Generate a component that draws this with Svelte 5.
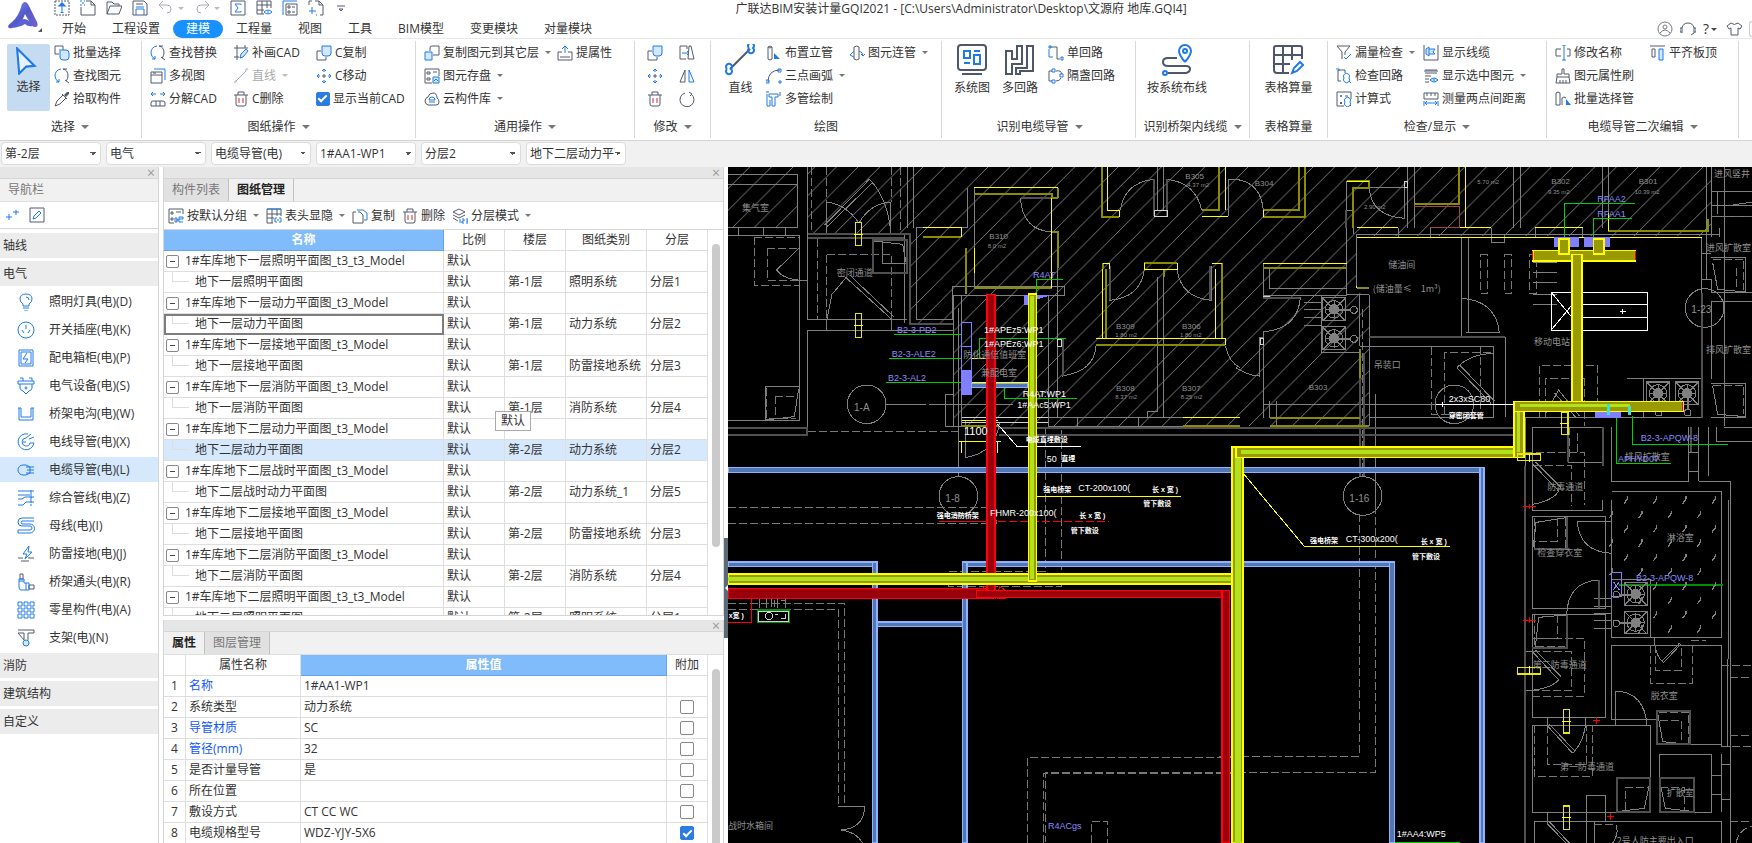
<script lang="ts">
  type Shape = [string, string];
  type Tool = { icon: string; label?: string; arrow?: boolean; disabled?: boolean; check?: boolean };
  type Group = { name: string; arrow?: boolean; kind?: string; big?: Tool[]; cols: Tool[][] };

  // shape kinds: k dark line, b blue line, f blue fill, l pale fill, r red line, g grey line
  const icons: Record<string, Shape[]> = {
    upload: [["d", "M1 1H15V15H1Z"], ["b", "M8 13V4"], ["f", "M3.5 6.5L8 2L12.5 6.5Z"], ["b", "M6.5 12.5H9.5"]],
    newFile: [["k", "M6 1H11L15 5V15H1V7M11 1V5H15"], ["b", "M0 1H2M4 1H5M2 3H4M0 5H2M4 5H5"]],
    open: [["k", "M1 14V2H6L8 4H13V6M1 14L4 6H16L13 14Z"]],
    save: [["k", "M4 1H12L15 4V15H1V1H4M4 4H11"], ["b", "M4 15V9H12V15M4 7H12"]],
    undo: [["g", "M5 1L1 5L5 9M1 5H9Q13 5 13 9T9 13"]],
    redo: [["g", "M11 1L15 5L11 9M15 5H7Q3 5 3 9T7 13"]],
    sigma: [["k", "M1 1H15V15H1Z"], ["b", "M11 5V4H5L8 8L5 12H11V11"]],
    gridEye: [["k", "M15 8V1H1V14H8M1 5H15M1 10H8M6 1V14M11 1V8"], ["b", "M8 12Q12 8 16 12Q12 16 8 12M11 12H13"]],
    listDoc: [["b", "M1 15V1H15"], ["k", "M4 4H15V15H4ZM10 7H13M10 12H13M6 6H8V8H6ZM6 11H8V13H6Z"]],
    addDoc: [["k", "M1 5V1H4M7 1H11L15 5V15H12M11 1V5H15M9 15H8"], ["b", "M4 7V14M1 11H8"]],
    more: [["k", "M3 6H11"], ["k", "M5 9L7 11L9 9Z"]],
    arrow: [["b", "M3 2L28 27L16 28L6 38Z"]],
    batch: [["k", "M1 1H9V7M1 1V9H5"], ["lb", "M5 5H12Q15 5 15 8V12Q15 15 12 15H9Q6 15 6 12V6"]],
    find: [["b", "M7 1Q1 2 1 8Q1 12 5 14M2 14H5V11"], ["k", "M9 1Q14 2 14 8Q14 11 12 13M9 1H13M11 12L15 15"]],
    dropper: [["k", "M1 15L3 10L9 4L12 7L6 13ZM8 3L13 8"], ["kf", "M10 4L13 1H15V3L12 6Z"]],
    windows: [["b", "M4 1H15V12"], ["k", "M1 4H12V15H1ZM1 7H12M3 5H6"]],
    split: [["b", "M6 3H1L3 1M1 3L3 5M10 3H15L13 1M15 3L13 5"], ["k", "M3 10H13Q15 10 15 12V15H1V12Q1 10 3 10M6 10V15M10 10V15"]],
    patch: [["k", "M4 0V15M1 3H15M1 12H6M12 0V3"], ["lb", "M7 13L8 9L13 4L15 6L10 12Z"]],
    line: [["g", "M3 13L13 3M1 14H3V12M13 3V1H15"]],
    trash: [["k", "M3 4V13Q3 15 5 15H11Q13 15 13 13V4M1 4H15M5 4V1H11V4"], ["r", "M6 7V12M10 7V12"]],
    copy: [["k", "M5 6H1V15H10V12"], ["lb", "M6 1H15V8Q15 11 12 11H9Q6 11 6 8Z"]],
    move: [["b", "M8 1V4M6 3L8 1L10 3M8 15V12M6 13L8 15L10 13M1 8H4M3 6L1 8L3 10M15 8H12M13 6L15 8L13 10"], ["k", "M6 8H10M8 6V10"]],
    copyTo: [["lb", "M1 7H8V15H1Z"], ["k", "M6 6V3Q6 1 8 1H15V10H9"]],
    store: [["k", "M15 8V1H1V15H8M3 4H6V6H3ZM3 10H6V12H3ZM9 4H13"], ["lb", "M9 9H15V15H9ZM10 13L12 11L14 13"]],
    cloud: [["k", "M4 14Q1 13 1 10T4 6Q5 2 9 2T13 7Q15 8 15 11T12 14Z"], ["b", "M5 9Q5 6 8 6T11 9ZM5 11H11"]],
    lift: [["b", "M8 8V1M5 4L8 1L11 4"], ["k", "M5 7H1V15H15V7H11M3 12H13"]],
    flipDoc: [["k", "M7 14H1V1H8V4M10 1H12L15 14H9Z"], ["b", "M3 8H10M8 6L10 8L8 10"]],
    mirror: [["k", "M6 2V14H1Z"], ["b", "M10 2V14H15Z"]],
    rotate: [["k", "M6 2A7 7 0 1 0 12 3M10 1L13 3L11 5"]],
    bigLine: [["K", "M5 25L25 5"], ["B", "M2 25A3 3 0 1 0 6 25A3 3 0 1 0 2 25M24 4A3 3 0 1 0 28 4A3 3 0 1 0 24 4"]],
    riser: [["k", "M2 2Q4 0 6 2V14Q4 16 2 14ZM2 2Q4 4 6 2"], ["f", "M8 8L14 14H8Z"]],
    arc: [["k", "M2 14Q2 2 14 2"], ["b", "M0 12H3V15H0ZM12 1H15V4H12ZM13 13H15V15H13Z"]],
    multi: [["b", "M3 3H12V6H9V15H6V6H3ZM1 3V15H4V9"], ["k", "M0 1H3M14 1V5"]],
    joinPipe: [["k", "M5 2Q8 0 10 2V14Q8 16 5 14Z"], ["b", "M5 6L1 10L5 12M10 6Q14 7 14 11M12 9L14 11L16 9"]],
    system: [["K", "M5 1H27Q30 1 30 4V23Q30 26 27 26H5Q2 26 2 23V4Q2 1 5 1M6 30H26"], ["B", "M8 7H14V14H8ZM18 7H24M18 11H24V20H18ZM8 19H14"]],
    circuits: [["K", "M2 7H8V15H13V2H18V20H8V30H2ZM23 2H29V27H16V30H12V24H23Z"]],
    single: [["k", "M2 2H9V14H12"], ["b", "M1 1H3V3H1ZM13 12H15V15H13ZM1 4V12H5"]],
    box: [["k", "M4 3H1V13H4M8 3Q13 2 14 6M13 10Q12 13 8 13"], ["b", "M4 1H7V4H4ZM4 12H7V15H4ZM12 6H15V9H12Z"]],
    route: [["K", "M16 14H7Q2 14 2 18T7 22H25Q29 22 29 25T25 29H7"], ["B", "M24 18Q18 11 18 7A6 6 0 0 1 30 7Q30 11 24 18M22 7A2 2 0 1 0 26 7A2 2 0 1 0 22 7M2 29A2 2 0 1 0 6 29A2 2 0 1 0 2 29"]],
    tableCalc: [["K", "M30 15V4Q30 2 28 2H4Q2 2 2 4V26Q2 29 5 29H17M2 11H30M2 20H18M11 2V29M20 2V16"], ["B", "M20 29L22 24L28 18L31 21L25 27Z"]],
    filter: [["k", "M1 1H14L9 7V10M1 1L6 7V14"], ["b", "M8 12L10 14L15 9"]],
    checkLoop: [["k", "M2 2H9V5M2 2V13H5"], ["b", "M0 1H3V3M8 10A3 3 0 1 0 13 10A3 3 0 1 0 8 10M13 13L15 15"]],
    formula: [["k", "M15 8V1H1V15H8M4 5H6M5 4V6M9 5H12M4 11L6 13M6 11L4 13"], ["b", "M9 11A3 3 0 1 0 14 11A3 3 0 1 0 9 11M14 14L15 15"]],
    cable: [["k", "M1 0V15H15M15 0V15"], ["lb", "M3 4L6 2V11L3 9ZM6 4H12L10 7L12 9H6"]],
    layers: [["k", "M2 2H14M2 5H14M2 8H8M2 11H6M1 3H15M2 14H6"], ["lb", "M7 12Q11 8 15 12Q11 16 7 12M10 12H12"]],
    measure: [["k", "M1 2H15V8H1ZM4 2V5M8 2V5M12 2V5"], ["b", "M1 10V15M15 10V15M2 12H14M4 10L2 12L4 14M12 10L14 12L12 14"]],
    rename: [["k", "M6 4H1V11H6M12 4H15V11H12"], ["b", "M9 0V15M7 0H11M7 15H11"]],
    brush: [["k", "M7 1H9V6H14V9H2V6H7ZM2 9L1 15H15L14 9M5 12V15M8 12V15M11 12V15"]],
    pipeSel: [["k", "M1 2Q3 0 5 2V14H1ZM7 14V7Q9 5 11 7"], ["f", "M11 8L16 14H11Z"]],
    alignTop: [["k", "M0 1H15M2 4H5V12H2Z"], ["lb", "M9 4H13V15H9Z"]],
    user: [["u", "M8 1A7 7 0 1 0 8 15A7 7 0 1 0 8 1M6 6A2 2 0 1 0 10 6A2 2 0 1 0 6 6M3 12Q8 6 13 12"]],
    headset: [["k", "M2 12V7Q3 2 8 2T14 7V12M2 7H0V11H2M14 7H16V11H14M14 12L11 14"]],
    shirt: [["k", "M5 2L1 5L3 8L5 7V14H12V7L14 8L16 5L12 2Q8 5 5 2"]],
    plus: [["b", "M4 7V13M1 10H7M11 3V8M8 5H14"]],
    edit: [["k", "M1 1H15V15H1Z"], ["b", "M4 12L5 9L10 4L12 6L7 11Z"]],
    groupBy: [["k", "M15 6V1H1V15H6M3 4H5V6H3ZM3 10H5V12H3ZM8 4H13"], ["b", "M8 12H11M7 10H9V14H7ZM11 9V14M11 9H15V11H11M11 14H15"]],
    header: [["k", "M1 1H15V8M1 1V15H7M1 6H15M1 10H8M6 1V15M11 1V8"], ["b", "M1 1H15M11 10H9V14H11M13 10H15V14H13M11 12H13"]],
    copyDoc: [["k", "M1 4H4M1 4V15H11V7L8 4H6"], ["b", "M5 2H11L15 5V12H12"]],
    stack: [["k", "M1 4L7 1L13 4L7 7ZM1 7L7 10L13 7M1 10L6 13"], ["b", "M8 11V15M10 11H12V13H10V15H12M14 11H16V15H14M14 13H16"]],
    lamp: [["b", "M6 13V11Q3 9 3 6Q3 1 9 1T15 6Q15 9 12 11V13ZM6 15H12M7 18H11"], ["b", "M9 4Q12 4 12 7"]],
    socket: [["b", "M9 1A8 8 0 1 0 9 17A8 8 0 1 0 9 1M9 4V8M5 9L7 12M13 9L11 12"]],
    panel: [["b", "M2 1H16V17H2ZM4 3H14V15H4ZM10 4L6 10H11L8 14"]],
    device: [["b", "M1 4H17V7H1ZM3 1H6V4M12 1H15V4M3 7V11Q3 13 6 14L9 17L12 14Q15 13 15 11V7M8 11A1 1 0 1 0 10 11A1 1 0 1 0 8 11"]],
    tray: [["b", "M1 3H4V12H14V3H17M2 3V15H16V3"]],
    wire: [["b", "M11 1A8 8 0 1 0 17 10H13A4 4 0 1 1 9 5M9 5L14 1M12 6L17 4M6 9H9"]],
    conduit: [["lb", "M9 4H6A5 5 0 0 0 6 14H9L13 12V6Z"], ["b", "M9 6H17M10 9H17M9 12H17"]],
    pipes: [["b", "M1 2H17M1 6H13M1 10H5L8 8H17M1 16H6L9 13H17M14 1V14M14 15V17"]],
    bus: [["b", "M17 1H5A4 4 0 0 0 5 9H13A2 2 0 0 1 13 13H1M17 4H5A2 2 0 0 0 5 7H13A4 4 0 0 1 13 16H1V13"]],
    bolt: [["b", "M12 1L6 9H10L8 14L15 7H11Z"], ["k", "M1 13H6M11 13H17M4 16H12"]],
    fitting: [["k", "M3 1H6V6H3ZM12 12H17V16H12Z"], ["b", "M2 6H7V10H12V17H4Q2 17 2 14ZM9 10V17M2 8H7"]],
    tiles: [["b", "M1 1H5V5H1ZM7 1H11V5H7ZM13 1H17V5H13ZM1 7H5V11H1ZM7 7H11V11H7ZM13 7H17V11H13ZM1 13H5V17H1ZM7 13H11V17H7ZM13 13H17V17H13Z"]],
    support: [["k", "M1 1H17V4H11V11M7 11V4H1Z"], ["lb", "M9 11A3 3 0 1 0 9 17A3 3 0 1 0 9 11"]]
  };

  const menus = ["开始", "工程设置", "建模", "工程量", "视图", "工具", "BIM模型", "变更模块", "对量模块"];

  const groups: Group[] = [
    {
      name: "选择", arrow: true, kind: "select", big: [{ icon: "arrow", label: "选择" }],
      cols: [[{ icon: "batch", label: "批量选择" }, { icon: "find", label: "查找图元" }, { icon: "dropper", label: "拾取构件" }]]
    },
    {
      name: "图纸操作", arrow: true, kind: "sheets",
      cols: [
        [{ icon: "find", label: "查找替换" }, { icon: "windows", label: "多视图" }, { icon: "split", label: "分解CAD" }],
        [{ icon: "patch", label: "补画CAD" }, { icon: "line", label: "直线", arrow: true, disabled: true }, { icon: "trash", label: "C删除" }],
        [{ icon: "copy", label: "C复制" }, { icon: "move", label: "C移动" }, { icon: "", label: "显示当前CAD", check: true }]
      ]
    },
    {
      name: "通用操作", arrow: true, kind: "common",
      cols: [
        [{ icon: "copyTo", label: "复制图元到其它层", arrow: true }, { icon: "store", label: "图元存盘", arrow: true }, { icon: "cloud", label: "云构件库", arrow: true }],
        [{ icon: "lift", label: "提属性" }]
      ]
    },
    {
      name: "修改", arrow: true, kind: "modify",
      cols: [[{ icon: "copy" }, { icon: "move" }, { icon: "trash" }], [{ icon: "flipDoc" }, { icon: "mirror" }, { icon: "rotate" }]]
    },
    {
      name: "绘图", kind: "draw", big: [{ icon: "bigLine", label: "直线" }],
      cols: [
        [{ icon: "riser", label: "布置立管" }, { icon: "arc", label: "三点画弧", arrow: true }, { icon: "multi", label: "多管绘制" }],
        [{ icon: "joinPipe", label: "图元连管", arrow: true }]
      ]
    },
    {
      name: "识别电缆导管", arrow: true, kind: "identify",
      big: [{ icon: "system", label: "系统图" }, { icon: "circuits", label: "多回路" }],
      cols: [[{ icon: "single", label: "单回路" }, { icon: "box", label: "隔盏回路" }]]
    },
    { name: "识别桥架内线缆", arrow: true, kind: "bridge", big: [{ icon: "route", label: "按系统布线" }], cols: [] },
    { name: "表格算量", kind: "calc", big: [{ icon: "tableCalc", label: "表格算量" }], cols: [] },
    {
      name: "检查/显示", arrow: true, kind: "inspect",
      cols: [
        [{ icon: "filter", label: "漏量检查", arrow: true }, { icon: "checkLoop", label: "检查回路" }, { icon: "formula", label: "计算式" }],
        [{ icon: "cable", label: "显示线缆" }, { icon: "layers", label: "显示选中图元", arrow: true }, { icon: "measure", label: "测量两点间距离" }]
      ]
    },
    {
      name: "电缆导管二次编辑", arrow: true, kind: "reedit",
      cols: [
        [{ icon: "rename", label: "修改名称" }, { icon: "brush", label: "图元属性刷" }, { icon: "pipeSel", label: "批量选择管" }],
        [{ icon: "alignTop", label: "平齐板顶" }]
      ]
    }
  ];

  const filters = [
    { label: "楼层", value: "第-2层" },
    { label: "专业", value: "电气" },
    { label: "构件类型", value: "电缆导管(电)" },
    { label: "构件", value: "1#AA1-WP1" },
    { label: "分层", value: "分层2" },
    { label: "图纸", value: "地下二层动力平面图" }
  ];

  const navItems = [
    ["lamp", "照明灯具(电)(D)"],
    ["socket", "开关插座(电)(K)"],
    ["panel", "配电箱柜(电)(P)"],
    ["device", "电气设备(电)(S)"],
    ["tray", "桥架电沟(电)(W)"],
    ["wire", "电线导管(电)(X)"],
    ["conduit", "电缆导管(电)(L)"],
    ["pipes", "综合管线(电)(Z)"],
    ["bus", "母线(电)(I)"],
    ["bolt", "防雷接地(电)(J)"],
    ["fitting", "桥架通头(电)(R)"],
    ["tiles", "零星构件(电)(A)"],
    ["support", "支架(电)(N)"]
  ];
  let activeItem = $state(6);

  const sheetTools = [
    { icon: "groupBy", label: "按默认分组", arrow: true },
    { icon: "header", label: "表头显隐", arrow: true },
    { icon: "copyDoc", label: "复制" },
    { icon: "trash", label: "删除" },
    { icon: "stack", label: "分层模式", arrow: true }
  ];

  const sheets = [
    { model: "1#车库地下一层照明平面图_t3_t3_Model", name: "地下一层照明平面图", floor: "第-1层", kind: "照明系统", layer: "分层1" },
    { model: "1#车库地下一层动力平面图_t3_Model", name: "地下一层动力平面图", floor: "第-1层", kind: "动力系统", layer: "分层2" },
    { model: "1#车库地下一层接地平面图_t3_Model", name: "地下一层接地平面图", floor: "第-1层", kind: "防雷接地系统", layer: "分层3" },
    { model: "1#车库地下一层消防平面图_t3_Model", name: "地下一层消防平面图", floor: "第-1层", kind: "消防系统", layer: "分层4" },
    { model: "1#车库地下二层动力平面图_t3_Model", name: "地下二层动力平面图", floor: "第-2层", kind: "动力系统", layer: "分层2" },
    { model: "1#车库地下二层战时平面图_t3_Model", name: "地下二层战时动力平面图", floor: "第-2层", kind: "动力系统_1", layer: "分层5" },
    { model: "1#车库地下二层接地平面图_t3_Model", name: "地下二层接地平面图", floor: "第-2层", kind: "防雷接地系统", layer: "分层3" },
    { model: "1#车库地下二层消防平面图_t3_Model", name: "地下二层消防平面图", floor: "第-2层", kind: "消防系统", layer: "分层4" },
    { model: "1#车库地下二层照明平面图_t3_t3_Model", name: "地下二层照明平面图", floor: "第-2层", kind: "照明系统", layer: "分层1" }
  ];
  const focused = 1;
  const current = 4;

  let props = $state([
    { name: "名称", value: "1#AA1-WP1", key: true, extra: null },
    { name: "系统类型", value: "动力系统", key: false, extra: false },
    { name: "导管材质", value: "SC", key: true, extra: false },
    { name: "管径(mm)", value: "32", key: true, extra: false },
    { name: "是否计量导管", value: "是", key: false, extra: false },
    { name: "所在位置", value: "", key: false, extra: false },
    { name: "敷设方式", value: "CT CC WC", key: false, extra: false },
    { name: "电缆规格型号", value: "WDZ-YJY-5X6", key: false, extra: true }
  ]);

  // cable trays: colour, x, y, width, height (three drawing units to a pixel)
  const trays: [string, number, number, number, number][] = [
    ["sky", 0, 901, 2268, 15], ["sky", 2256, 901, 12, 1127],
    ["sky", 0, 1185, 448, 14], ["sky", 433, 1185, 14, 843],
    ["sky", 703, 1185, 1296, 14], ["sky", 703, 1185, 14, 843], ["sky", 1985, 1185, 14, 843],
    ["sky", 448, 1365, 256, 14], ["sky", 730, 649, 170, 13],
    ["red", 0, 1264, 801, 31], ["red", 777, 382, 24, 913], ["red", 745, 1270, 760, 22], ["red", 1482, 1270, 23, 758],
    ["gold", 0, 1221, 1520, 30], ["lime", 0, 1231, 1520, 10], ["gold", 901, 380, 24, 861], ["lime", 907, 386, 12, 850],
    ["gold", 1512, 840, 32, 1188], ["lime", 1522, 850, 16, 1178],
    ["gold", 1524, 840, 864, 31], ["lime", 1540, 850, 830, 10],
    ["gold", 2357, 703, 30, 168], ["lime", 2366, 715, 10, 140],
    ["gold", 2414, 250, 308, 31], ["gold", 2531, 262, 31, 444],
    ["gold", 2357, 703, 507, 30], ["lime", 2376, 712, 330, 9],
    ["gold", 2492, 216, 31, 44], ["gold", 2596, 216, 31, 44]
  ];

  // labels on the drawing: style, x, y, text
  const marks: [string, number, number, string][] = [
    ["room", 42, 132, "集气室"], ["room", 326, 327, "密闭通道"],
    ["room", 706, 574, "防化通信值班室"], ["room", 759, 627, "兼配电室"],
    ["num", 784, 215, "B310"], ["area", 779, 242, "8.0 m2"],
    ["num", 1372, 36, "B305"], ["area", 1378, 60, "4.37 m2"],
    ["num", 1164, 485, "B309"], ["area", 1162, 509, "1.80 m2"],
    ["num", 1362, 485, "B306"], ["area", 1356, 509, "1.80 m2"],
    ["num", 1164, 671, "B308"], ["area", 1162, 696, "8.37 m2"],
    ["num", 1362, 671, "B307"], ["area", 1358, 696, "8.25 m2"],
    ["num", 1580, 58, "B304"], ["area", 1908, 126, "2.90 m2"], ["area", 2248, 52, "5.70 m2"],
    ["num", 2470, 50, "B302"], ["area", 2460, 82, "9.35 m2"],
    ["num", 2732, 50, "B301"], ["area", 2720, 82, "10.39 m2"],
    ["num", 1742, 670, "B303"], ["axis", 378, 733, "1-A"], ["axis", 652, 1006, "1-8"],
    ["axis", 1864, 1004, "1-16"], ["axis", 2890, 439, "1-23"],
    ["room", 2958, 30, "进风竖井"], ["room", 2934, 252, "进风扩散室"], ["room", 2934, 558, "排风扩散室"],
    ["room", 1981, 302, "储油间"], ["room", 1934, 374, "(储油量≤　1m³)"],
    ["room", 2418, 533, "移动电站"], ["room", 1937, 604, "吊装口"],
    ["room", 2690, 880, "排风扩散室"], ["room", 2458, 970, "防毒通道"],
    ["room", 2428, 1168, "检查穿衣室"], ["room", 2816, 1122, "淋浴室"],
    ["room", 2414, 1502, "第二防毒通道"], ["room", 2768, 1596, "脱衣室"],
    ["room", 2496, 1810, "第一防毒通道"], ["room", 2816, 1886, "扩散室"],
    ["room", 2666, 2030, "2号人防主要出入口"], ["room", 0, 1986, "战时水箱间"],
    ["tag", 507, 498, "B2-3-PD2"], ["tag", 491, 570, "B2-3-ALE2"], ["tag", 480, 642, "B2-3-AL2"],
    ["tag", 915, 333, "R4AT"], ["tag", 2608, 106, "RFAA2"], ["tag", 2608, 149, "RFAA1"],
    ["tag", 2738, 822, "B2-3-APQW-8"], ["tag", 2670, 884, "APHYD07"], ["tag", 2724, 1243, "B2-3-APQW-8"],
    ["tag", 960, 1985, "R4ACgs"],
    ["note", 768, 498, "1#APEz5:WP1"], ["note", 768, 540, "1#APEz6:WP1"],
    ["note", 884, 690, "R4AT:WP1"], ["note", 868, 722, "1#AAc5:WP1"],
    ["dim", 708, 804, "1100"], ["note", 956, 884, "50"], ["tiny", 1000, 882, "直埋"],
    ["tiny", 893, 824, "电缆直埋敷设"], ["tiny", 946, 976, "强电桥架"],
    ["note", 1051, 972, "CT-200x100("], ["tiny", 1272, 975, "长 x 宽 )"], ["tiny", 1246, 1018, "管下敷设"],
    ["tiny", 626, 1052, "强电消防桥架"], ["note", 786, 1046, "FHMR-200x100("], ["tiny", 1054, 1052, "长 x 宽 )"],
    ["tiny", 1028, 1098, "管下敷设"], ["tiny", 2, 1354, "x宽 )"],
    ["note", 2162, 704, "2x3xSC80"], ["tiny", 2162, 754, "穿密闭套管"],
    ["tiny", 1746, 1128, "强电桥架"], ["note", 1853, 1124, "CT-300x200("],
    ["tiny", 2078, 1130, "长 x 宽 )"], ["tiny", 2052, 1176, "管下敷设"],
    ["note", 2006, 2010, "1#AA4:WP5"]
  ];

  // exhaust fans: centre and the side its duct leaves from
  const fans = [
    [1818, 427, "right"], [1818, 514, "right"], [2790, 679, "down"],
    [2877, 679, "down"], [2723, 1281, "left"], [2723, 1367, "left"]
  ];
  const ducts: Record<string, string> = {
    right: "M14 0H50M14 4H50M50 2A9 9 0 1 0 70 2A9 9 0 1 0 50 2",
    down: "M0 14V50M4 14V50M-8 58A9 9 0 1 0 12 58A9 9 0 1 0 -8 58",
    left: "M-14 0H-48M-14 4H-48M-48 2A9 9 0 1 1 -68 2A9 9 0 1 1 -48 2"
  };

  const slots = [
    [382, 167, 18, 68], [382, 440, 18, 71], [2500, 736, 20, 66], [2368, 861, 70, 20],
    [2368, 1501, 70, 20], [2506, 1628, 18, 70], [2506, 1917, 18, 70]
  ];

  function drips(): string {
    let d = "";
    for (let row = 0; row < 10; row++) {
      for (let col = 0; col < 4; col++) {
        if (row > 5 && col === 0) continue;
        d += `M${2688 + col * 88 - (row % 2) * 44} ${1010 + row * 43}l10 -14v-8`;
      }
    }
    return d;
  }
</script>

{#snippet icon(name: string, size: number = 16)}
  <svg class="icon s{size}" viewBox="0 0 {size} {size}" aria-hidden="true">
    {#each icons[name] as [kind, d]}
      <path class={kind} {d} />
    {/each}
  </svg>
{/snippet}

{#snippet closeBar()}
  <div class="close-bar"><button class="close" aria-label="关闭">×</button></div>
{/snippet}

<div class="app">
  <header>
    <button class="logo" aria-label="应用菜单">
      <svg viewBox="0 0 40 36">
        <defs>
          <linearGradient id="brand" x1="0" y1="0" x2="1" y2="1">
            <stop offset="0" stop-color="#8d92e8" />
            <stop offset="0.5" stop-color="#5259c9" />
            <stop offset="1" stop-color="#7b62cf" />
          </linearGradient>
        </defs>
        <path fill="url(#brand)" d="M14 4Q17 0 20 4L29 22Q31 27 27 27Q24 27 22 23L17 14Q14 24 4 28Q0 29 0 26Q1 24 4 22Q11 16 14 4Z" />
        <path fill="#5b62d6" d="M12 20Q18 17 22 22L25 26Q20 27 17 24Q12 27 4 28Q9 25 12 20Z" />
        <path fill="#555" d="M30 32H34V28Z" />
      </svg>
    </button>
    <div class="head-main">
      <div class="title-row">
        <div class="quick">
          {#each ["upload", "newFile", "open", "save"] as name}
            <button aria-label={name}>{@render icon(name)}</button>
          {/each}
          <button aria-label="undo">{@render icon("undo")}<i class="caret faint"></i></button>
          <button aria-label="redo">{@render icon("redo")}<i class="caret faint"></i></button>
          {#each ["sigma", "gridEye", "listDoc", "addDoc", "more"] as name}
            <button aria-label={name}>{@render icon(name)}</button>
          {/each}
        </div>
        <h1>广联达BIM安装计量GQI2021 - [C:\Users\Administrator\Desktop\文源府 地库.GQI4]</h1>
      </div>
      <div class="menu-row">
        <nav class="menus">
          {#each menus as menu}
            <button class="menu" class:active={menu === "建模"}>{menu}</button>
          {/each}
        </nav>
        <div class="account">
          <button aria-label="账号">{@render icon("user")}</button>
          <button aria-label="客服">{@render icon("headset")}</button>
          <button class="help">?<i class="caret"></i></button>
          <button aria-label="皮肤">{@render icon("shirt")}</button>
          <button class="search" aria-label="搜索"></button>
        </div>
      </div>
    </div>
  </header>

  <div class="ribbon">
    {#each groups as group}
      <section class="group {group.kind}">
        <div class="tools">
          {#each group.big ?? [] as tool}
            <button class="big" class:pressed={tool.icon === "arrow"}>
              {@render icon(tool.icon, tool.icon === "arrow" ? 40 : 32)}
              <span>{tool.label}</span>
            </button>
          {/each}
          {#each group.cols as col}
            <div class="col">
              {#each col as tool}
                {#if tool.check}
                  <label class="tool tick"><input type="checkbox" checked />{tool.label}</label>
                {:else}
                  <button class="tool" disabled={tool.disabled} aria-label={tool.label ?? tool.icon}>
                    {@render icon(tool.icon)}
                    {#if tool.label}<span>{tool.label}</span>{/if}
                    {#if tool.arrow}<i class="caret"></i>{/if}
                  </button>
                {/if}
              {/each}
            </div>
          {/each}
        </div>
        <button class="group-name">{group.name}{#if group.arrow}<i class="caret wide"></i>{/if}</button>
      </section>
    {/each}
  </div>

  <div class="filters">
    {#each filters as filter}
      <select aria-label={filter.label}>
        <option>{filter.value}</option>
      </select>
    {/each}
  </div>

  <main>
    <aside class="nav">
      {@render closeBar()}
      <div class="nav-title">导航栏</div>
      <div class="nav-tools">
        <button aria-label="新增">{@render icon("plus")}</button>
        <button aria-label="编辑">{@render icon("edit")}</button>
      </div>
      <div class="nav-list">
        <button class="section">轴线</button>
        <button class="section">电气</button>
        {#each navItems as [name, label], i}
          <button class="item" class:active={i === activeItem} onclick={() => (activeItem = i)}>
            {@render icon(name, 18)}
            <span>{label}</span>
          </button>
        {/each}
        <button class="section">消防</button>
        <button class="section">建筑结构</button>
        <button class="section">自定义</button>
      </div>
    </aside>

    <div class="panels">
      <section class="panel sheets-panel">
        {@render closeBar()}
        <div class="tabs">
          <button>构件列表</button>
          <button class="active">图纸管理</button>
        </div>
        <div class="panel-tools">
          {#each sheetTools as tool}
            <button>{@render icon(tool.icon)}<span>{tool.label}</span>{#if tool.arrow}<i class="caret"></i>{/if}</button>
          {/each}
        </div>
        <div class="table-area">
          <table class="sheet-table">
            <thead>
              <tr>
                <th class="name chosen">名称</th>
                <th class="short">比例</th>
                <th class="short">楼层</th>
                <th class="kind">图纸类别</th>
                <th class="short">分层</th>
              </tr>
            </thead>
            <tbody>
              {#each sheets as sheet, i}
                <tr>
                  <td class="tree"><div class="branch"><button class="fold" aria-label="折叠"></button>{sheet.model}</div></td>
                  <td>默认</td>
                  <td></td>
                  <td></td>
                  <td></td>
                </tr>
                <tr class:current={i === current}>
                  <td class="tree" class:focused={i === focused}><div class="branch"><i class="elbow"></i>{sheet.name}</div></td>
                  <td>默认</td>
                  <td>{sheet.floor}</td>
                  <td>{sheet.kind}</td>
                  <td>{sheet.layer}</td>
                </tr>
              {/each}
            </tbody>
          </table>
          <div class="scroll"><div class="thumb"></div></div>
          <div class="tooltip" role="tooltip">默认</div>
        </div>
      </section>

      <section class="panel props-panel">
        {@render closeBar()}
        <div class="tabs">
          <button class="active">属性</button>
          <button>图层管理</button>
        </div>
        <div class="table-area">
          <table class="prop-table">
            <thead>
              <tr>
                <th class="no"></th>
                <th class="label">属性名称</th>
                <th class="chosen">属性值</th>
                <th class="extra">附加</th>
              </tr>
            </thead>
            <tbody>
              {#each props as prop, i}
                <tr>
                  <td class="no">{i + 1}</td>
                  <td class:key={prop.key}>{prop.name}</td>
                  <td>{prop.value}</td>
                  <td class="extra">
                    {#if prop.extra !== null}
                      <input type="checkbox" bind:checked={prop.extra} aria-label={prop.name} />
                    {/if}
                  </td>
                </tr>
              {/each}
            </tbody>
          </table>
          <div class="scroll"><div class="thumb long"></div></div>
        </div>
      </section>
    </div>

    <button class="splitter" aria-label="收起"></button>

    <div class="canvas">
      <svg viewBox="0 0 3072 2028" preserveAspectRatio="xMinYMin slice">
        <defs>
          <pattern id="hatch" width="65" height="65" patternUnits="userSpaceOnUse">
            <path class="hatch-line" d="M-2 67L67 -2" />
          </pattern>
        </defs>

        <path class="hatch" d="M0 0H209V182H0ZM239 0H2949V207H1886V377H1924V777H679V467H547V202H239Z" />

        <!-- air-raid rooms, upper left -->
        <g class="plan" transform="translate(-6 -3)">
          <path d="M6 25H215V185H6M6 55H215M6 208H220V763H6M245 3V460H543M245 493H680M245 493V785M37 185V208M112 185V208H178V185M302 460V493M495 460V493" />
          <path d="M220 245L152 312Q175 345 245 343M302 108Q360 115 398 170M492 108Q430 115 400 170M302 108V200M492 108V200M430 40L295 178M440 50L300 185M430 40Q480 90 492 180M360 335L495 458M372 328L503 452M360 335L318 385L303 460M118 662H220M118 662V762M218 668L205 752L118 762" />
          <path d="M445 225L530 235L543 305M470 220V292H540M570 185V460H680V360H1015V387H680M543 3V185M562 3V185M570 185H725M725 65V185M745 65V367M722 320V365M535 205V470" />
          <path d="M682 387V780H707V387M658 685H682M658 685V780H682M697 425V932M967 387V780M995 387V755M967 755H1542M967 780H1542M1054 755V780M1238 755V780M995 300V387" />
          <path d="M883 95Q890 195 978 197M1010 540V630Q1105 615 1110 540M1150 300V403Q1245 395 1255 310M1353 310Q1365 395 1455 403V300M1498 540Q1510 590 1542 605M1183 133Q1195 50 1283 40V150M1427 133Q1410 50 1323 40V150M1508 150V40H1542M1295 3V135M1313 3V135M1295 333V735H1265V753M1313 333V753M717 765V875Q810 860 820 770M481 715H600M610 715H860" />
          <circle cx="422" cy="715" r="58" />
          <circle cx="697" cy="990" r="58" />
          <path class="dash" d="M85 213H220M85 213V358H220M124 247H220M124 247V343H240M302 266H495V493M302 266V493M245 795H700M255 3V200M302 3V108M495 3V108M524 3V200M273 220V460M122 667V758H210M148 690V750M148 690H215M957 785V1215H667V1262H1005V785M957 785H1005" />
          <path class="thick" d="M6 785H243V806H6M245 205H553V475H680M440 222H543V320H440ZM245 217H535M885 97H985M820 785H1542M820 806H1542M1010 520V630M1153 300V403M1453 300V403M1283 40V150M1323 40V150" />
          <path class="pale" d="M708 753H967M708 768H967M995 520H1007V540H995ZM1285 133H1323V151H1285Z" />
          <path class="olive" d="M745 83H977V95H997M997 65V95M745 367H977M977 197H997V305M1127 3V152H1180M1428 133H1478V3M1140 310V517M1130 292V310M1487 292V517M1110 537H1497M1255 292H1353M1313 310V333M592 213H705M815 780H708M721 245V385M1372 780H1542" />
          <path class="bright" d="M745 65H997M977 95V367M1145 3V133H1180V152M1497 3V133M1428 152H1507M1130 310V517M1130 292H1150V310M1255 310V292M1353 292V310H1255M1457 292H1487M1468 310V517M1110 517H1497V537M592 185H705V213M745 245V320M708 763H815M1372 755H1542M700 827H825M706 827V862M813 827V862M738 577H785M738 650H905" />
          <path class="green" d="M505 505H707M490 577H707M480 649H707M931 385V340H1012M760 577V517H1020M835 655V697H1052" />
          <path class="violet" d="M707 469H736V613H707ZM707 541H736" />
          <path class="violet solid" d="M707 613H736V685H707ZM894 388H968L930 400V416H894Z" />
          <path class="white" d="M815 775L873 841H1065" />
          <path class="bright" d="M931 990H1366" />
        </g>

        <!-- generator station, upper right -->
        <g class="plan" transform="translate(1524 -3)">
          <path d="M0 40Q75 50 82 133M332 46V385M352 65V205M362 205H1450M362 205V365M331 133H352M400 65Q405 150 505 157V65H400M515 3V185M535 3V185M833 3V185M853 3V185M1098 3V185M1117 3V190M487 185V213M583 185V213M765 185V230H805V205M897 185V213M1040 185V213M82 292V387H332M101 305V367H332M331 385H400M257 387V560H371V755M400 387V780M82 755V497Q185 490 193 395H82M0 605Q40 630 70 630V515H82M371 540H771V753H400M400 513H808V753M371 387V540" />
          <path d="M677 213V513M696 213V500M679 397Q780 405 790 500H690M663 605L765 712M672 598L775 705M663 605Q700 565 771 562M82 715H600M600 715H720M101 705V755M121 705V780M417 685V1020" />
          <path d="M1397 213V755M1425 3V213M1410 3V260M1450 213V185M1397 262H1425M1411 262V340M1425 378H1548M1425 407V640M1425 407H1548M1397 340H1425V378M1425 275H1528V378M1430 290L1445 370L1528 378M1425 653H1528V753H1425M1430 660L1445 745L1528 752M1465 3L1465 780M1425 75H1548M1425 118H1548M1443 75V145M1425 152H1548M1485 118L1548 108M1172 638H1397M867 755H1397M1223 638V755M889 783H1098M889 783V1020M867 755V1020M1127 783V945H1357V783M1098 783V888H995M1357 858H1388V915H1357M1388 783V945M1485 945H1388M1127 975H1455V1020M1483 945V1020M1417 783V930M1440 783V825H1548M1465 783H1548" />
          <path d="M889 893L968 975M898 888L975 965M889 1015Q950 1005 968 975M930 740L968 672L1030 750M955 680L1020 755M892 290H963M892 318H963M892 350H963M892 385H963M892 414H963M205 408H257M205 431H257M205 454H257M205 477H257" />
          <circle cx="655" cy="715" r="58" />
          <circle cx="380" cy="990" r="58" />
          <circle cx="1406" cy="426" r="58" />
          <path class="dash" d="M734 266H754V382H734ZM806 266H826V382H806ZM880 266H900V382H880ZM587 543V745H732V543M626 743V560H771M910 755V598H1084V735M928 755V638H1045V780M1000 783V880M1024 800V857M867 860H1045V1018M895 898H1006V1020M1430 280H1523V372M1500 305V370M1430 657H1523V745M1425 152H1548M380 430V930M371 1045V1770H-60M418 1020V1820H-572V2028" />
          <path class="thick" d="M331 185V133M0 785H833M0 806H833M995 783V888M1365 858V783M867 900V1020M371 560V930M385 560V930M1397 380V755M1100 783V900M82 395H193M400 513H808" />
          <path class="olive" d="M82 133H188V3M82 152H208V3M332 46H400V65H352V185M82 305H332M101 755H371M101 780H400M535 113H670V3M371 550V635M362 367H400M1117 195H1415V160" />
          <path class="bright" d="M82 152V133M82 292H332M332 46H400M362 213H1397M362 185H487M583 185H765M897 185H1040M688 3V185M362 360V367M1117 140V195" />
          <path class="rose" d="M535 122H670V185M583 185H670" />
          <path class="green" d="M985 213V113H1197M1073 213V157H1188M1141 750V891H1306M1189 750V834H1475" />
          <path class="violet solid" d="M955 215H1028V242H955ZM1046 215H1120V242H1046ZM1078 738H1152V753H1078Z" />
          <path class="white" d="M945 378H1234V493H945ZM945 378L1040 493M1040 378L945 493M1040 378V493M1040 416H1234M1040 455H1234M1152 436H1169M1160 428V445M1008 436H1025M600 715H835M618 708V722" />
          <path class="pale" d="M506 46H515V65H506ZM73 518H82V535H73ZM82 390H102" />
          <path class="bright" d="M20 920L205 1141H643" />
        </g>

        <!-- lower left: water tank room -->
        <g class="plan" transform="translate(-6 999)">
          <path class="dash" d="M6 21H810M6 70H812V21M6 310H355V918M6 328H336V918M904 1029V772H1542M952 1029V820H1542M1096 1029V965H1145V1029" />
          <path d="M336 918H416Q415 985 345 990Q390 995 410 1029M100 280V325M105 290H120V325M125 282H135V320M145 320V300M155 280V325M165 300H178V325M178 282V325" />
          <path class="green-thick" d="M95 329H190V367H95Z" />
          <path class="pale" d="M98 334H187V363H98ZM118 348A10 10 0 1 0 140 348A10 10 0 1 0 118 348M148 342H155M165 355H178V342" />
          <path class="red-line" d="M640 65H812M6 367H77V297M772 262L800 250M820 260L838 270V295H815Z" />
          <path class="red-line broken" d="M815 65H1150" />
        </g>

        <!-- lower right: decontamination rooms -->
        <g class="plan" transform="translate(1524 999)">
          <path d="M867 0V1029M889 0V30H1098V0M889 50H1108V325H889ZM889 343H1108V652H889ZM889 676H1243V936H889ZM895 1029V965H1455V1029M1127 0V411H1455V0M1127 436H1455V738M1127 436V657H1263M1243 238V411M1127 238H1243M1263 733H1455M1271 763H1425V936H1271ZM1478 0L1475 740M1483 0V1029M1455 738H1483M1425 826H1455V884H1425M1455 763V936M1455 792H1483M1455 898H1483" />
          <path d="M895 68L990 53M892 140L900 68M1024 65H1127M1024 65Q1030 155 1127 160M992 345Q995 245 1088 240V325M898 440L908 352L990 345M889 455L968 540M898 450L975 530M867 572Q940 570 968 540M867 455H889M1255 415Q1258 470 1283 488L1335 432M1279 483L1330 430M1138 676V573Q1225 575 1233 676M1265 640L1280 725L1360 733M933 655V676L1010 760M940 672L1018 755M1010 760Q1048 720 1050 655M933 935V970L990 1029M940 965L1000 1029M1050 1029V965M1243 840L1225 925L1140 935M1271 840L1288 925L1375 935M1050 965V887H1108V965M1075 965V1029M1140 975Q1150 1000 1130 1029M1075 295H1127M1075 318H1127M1075 340H1127M1075 362H1127M1075 385H1127" />
          <path class="dash" d="M895 55V150M964 55V123H895M988 55V145M895 345V440H988M964 345V415H895M889 415H1045V589H889M889 455H1006V571H889M1243 436V550H1369V436M1258 436V512H1335V436M895 676V830H1069V676M935 676V792H1050V676M1269 636H1358V728M1271 660H1335V730M1168 930V863H1240M1271 863H1345V930M1455 497H1548M1483 532H1548M1483 705H1548M1455 738H1548M1483 965H1548M1500 1029Q1510 985 1548 980M1365 422H1410M1075 972H1140" />
          <path class="thick" d="M992 50V148H895M992 345V445H889M1263 632H1363V733H1263ZM1142 835H1243V936H1142ZM1271 835H1375V936H1271ZM867 0V1029M1088 240V325" />
          <path class="red-line" d="M862 20H900M880 12V28M862 361H900M880 352V370M1072 661H1092M1081 652V672M1114 950H1134M1124 940V960" />
          <path class="green-thick" d="M1150 255H1460" />
          <path class="violet" d="M1127 218H1156V290H1127ZM1132 245L1150 270M1150 245L1132 270" />
          <path class="green" d="M475 1027H672" />
        </g>
        <path class="drips" d={drips()} />

        {#each fans as [x, y, side]}
          <g class="fan" transform="translate({x} {y})">
            <rect x="-34" y="-34" width="68" height="68" />
            <circle r="26" />
            <circle class="hub" r="14" />
            <path d="M-34 -34L34 34M34 -34L-34 34M-28 0H28M0 -28V28" />
            <path d={ducts[side]} />
          </g>
        {/each}

        {#each trays as [kind, x, y, w, h]}
          <rect class={kind} {x} {y} width={w} height={h} />
        {/each}
        <path class="red-line" d="M2414 253V280M2721 253V280M2863 706V732" />
        <path class="cyan" d="M2641 712V745M2704 718V745" />

        {#each slots as [x, y, w, h]}
          <rect class="slot" {x} {y} width={w} height={h} />
          <path class="bright" d={w > h ? `M${x + w / 2} ${y - 4}V${y + h + 4}` : `M${x - 4} ${y + h / 2}H${x + w + 4}`} />
        {/each}

        {#each marks as [kind, x, y, text]}
          <text class={kind} {x} {y}>{text}</text>
        {/each}
      </svg>
    </div>
  </main>
</div>

<style>
  :global(body) {
    margin: 0;
    background: #f1f1f1;
  }

  .app {
    display: flex;
    flex-direction: column;
    height: 100vh;
    overflow: hidden;
    color: #333;
    font-family: "Open Sans", "Noto Sans CJK SC", sans-serif;
    font-size: 12px;
    line-height: 16px;
  }

  button, select, input {
    font: inherit;
    color: inherit;
    margin: 0;
  }

  button {
    display: flex;
    align-items: center;
    padding: 0;
    border: 0;
    background: none;
    white-space: nowrap;
  }

  .icon {
    flex: none;
    fill: none;
    stroke-width: 1;
  }

  .s16 { width: 16px; height: 16px; }
  .s18 { width: 18px; height: 18px; }
  .s32 { width: 32px; height: 32px; }
  .s40 { width: 28px; height: 28px; }

  .k { stroke: #535b6d; }
  .d { stroke: #535b6d; stroke-dasharray: 2 1; }
  .b { stroke: #1f7ae8; }
  .f { fill: #1f7ae8; }
  .kf { fill: #535b6d; }
  .lb { stroke: #1f7ae8; fill: #d3e7ff; }
  .r { stroke: #e0242b; }
  .g { stroke: #a8abb2; }
  .u { stroke: #777b84; }
  .K { stroke: #4d566b; stroke-width: 2; }
  .B { stroke: #1f7ae8; stroke-width: 2; }
  .s40 .b { stroke-width: 3; fill: #e9f3ff; }

  .caret {
    display: inline-block;
    flex: none;
    margin-left: 6px;
    border: 3px solid transparent;
    border-top-color: #777;
    border-bottom: 0;
  }

  .caret.wide {
    margin-left: 6px;
    border-width: 4px 4px 0;
  }

  .caret.faint {
    margin-left: 4px;
    border-top-color: #bbb;
  }

  header {
    display: flex;
    flex: none;
    background: #fff;
    border-bottom: 1px solid #e8e8e8;
  }

  .logo {
    width: 49px;
    padding-left: 8px;
    box-sizing: border-box;
    align-items: flex-start;
  }

  .logo svg {
    width: 40px;
    height: 36px;
  }

  .head-main {
    flex: 1;
    min-width: 0;
  }

  .title-row {
    display: flex;
    height: 20px;
  }

  .quick {
    display: flex;
    align-items: flex-start;
    gap: 10px;
    padding-left: 5px;
  }

  h1 {
    flex: 1;
    margin: 0;
    padding-right: 180px;
    font-size: 12px;
    font-weight: 400;
    line-height: 18px;
    text-align: center;
    white-space: nowrap;
  }

  .menu-row, .menus, .account {
    display: flex;
  }

  .menu-row {
    height: 18px;
    justify-content: space-between;
  }

  .menu {
    height: 18px;
    padding: 0 13px;
  }

  .menu.active {
    border-radius: 9px;
    background: #1890ff;
    color: #fff;
  }

  .account {
    align-items: center;
    gap: 7px;
  }

  .search {
    width: 3px;
    height: 16px;
    border: 1px solid #ccc;
    border-right: 0;
    border-radius: 3px 0 0 3px;
  }

  .help {
    width: 16px;
    font-size: 14px;
  }

  .help .caret {
    margin-left: 2px;
    border-top-color: #444;
  }

  .ribbon {
    display: flex;
    flex: none;
    height: 101px;
    background: #fff;
    border-bottom: 1px solid #d4d4d4;
  }

  .group {
    display: flex;
    flex-direction: column;
    flex: none;
    box-sizing: border-box;
    height: 97px;
    margin-top: 2px;
    padding: 0 8px;
    border-right: 1px solid #d9d9d9;
  }

  .select { width: 142px; padding-left: 7px; }
  .sheets { width: 274px; }
  .common { width: 219px; }
  .modify { width: 76px; padding: 0 12px; }
  .draw { width: 231px; }
  .identify { width: 194px; padding-left: 10px; }
  .bridge { width: 114px; }
  .calc { width: 78px; }
  .inspect { width: 219px; }
  .reedit { width: 192px; }

  .tools {
    display: flex;
    flex: 1;
    gap: 16px;
  }

  .select .tools { gap: 4px; }
  .common .tools { gap: 6px; }
  .draw .tools { gap: 4px; }
  .identify .tools { gap: 8px; }
  .inspect .tools { gap: 8px; }
  .bridge .tools { padding-left: 3px; }
  .calc .tools { justify-content: center; }

  .col {
    display: flex;
    flex-direction: column;
  }

  .tool {
    height: 23px;
    gap: 3px;
  }

  .tool .caret {
    margin-left: 3px;
  }

  .tool:disabled {
    color: #aaa;
  }

  .tool:disabled .caret {
    border-top-color: #bbb;
  }

  .tick {
    display: flex;
    align-items: center;
    white-space: nowrap;
  }

  .big {
    flex-direction: column;
    box-sizing: border-box;
    min-width: 43px;
    height: 67px;
    padding-top: 3px;
    gap: 4px;
  }

  .big.pressed {
    margin-top: 3px;
    border-radius: 2px;
    background: #c5dbf2;
  }

  .identify .big {
    min-width: 40px;
  }

  .group-name {
    align-self: center;
    height: 22px;
  }

  input[type="checkbox"] {
    display: grid;
    place-items: center;
    appearance: none;
    box-sizing: border-box;
    width: 14px;
    height: 14px;
    border: 1px solid #888;
    border-radius: 2px;
    background: #fff;
  }

  input[type="checkbox"]:checked {
    border-color: #2b7de1;
    background: #2b7de1;
  }

  input[type="checkbox"]:checked::before {
    content: "";
    width: 7px;
    height: 3px;
    margin-bottom: 2px;
    border: solid #fff;
    border-width: 0 0 2px 2px;
    transform: rotate(-45deg);
  }

  .filters {
    display: flex;
    flex: none;
    gap: 5px;
    height: 26px;
    padding: 1px 1px 0;
    box-sizing: border-box;
    background: #f1f1f1;
  }

  select {
    appearance: none;
    width: 100px;
    height: 23px;
    padding: 0 10px 0 3px;
    border: 1px solid #dcdcdc;
    border-radius: 4px;
    background:
      linear-gradient(to bottom right, #555 50%, transparent 50%) right 4px center / 3px 3px no-repeat,
      linear-gradient(to bottom left, #555 50%, transparent 50%) right 7px center / 3px 3px no-repeat,
      #fff;
  }

  main {
    display: flex;
    flex: 1;
    min-height: 0;
    background: #fff;
  }

  .nav {
    flex: none;
    width: 158px;
    margin-right: 4px;
    border-right: 1px solid #d5d5d5;
  }

  .close-bar {
    display: flex;
    justify-content: flex-end;
    height: 11px;
    padding-right: 3px;
    border-bottom: 1px solid #d5d5d5;
    background: #e6e6e6;
  }

  .close {
    color: #999;
    font-size: 14px;
    line-height: 10px;
  }

  .nav-title {
    height: 22px;
    padding-left: 8px;
    border-bottom: 1px solid #dedede;
    background: #f1f1f1;
    color: #777;
    line-height: 22px;
  }

  .nav-tools {
    display: flex;
    align-items: center;
    gap: 8px;
    height: 26px;
    padding-left: 5px;
    border-bottom: 1px solid #d5d5d5;
  }

  .nav-list {
    display: flex;
    flex-direction: column;
    gap: 3px;
    padding-top: 4px;
  }

  .nav-list button {
    height: 25px;
  }

  .section {
    padding-left: 3px;
    background: #ececec;
  }

  .item {
    gap: 14px;
    padding-left: 17px;
  }

  .item.active {
    background: #d5e8fc;
  }

  .panels {
    display: flex;
    flex: none;
    flex-direction: column;
    gap: 4px;
    width: 561px;
  }

  .panel {
    display: flex;
    flex-direction: column;
    min-height: 0;
    box-sizing: border-box;
    border-left: 1px solid #d5d5d5;
    border-right: 1px solid #d5d5d5;
  }

  .sheets-panel {
    flex: 1;
    border-bottom: 1px solid #d5d5d5;
  }

  .props-panel {
    flex: none;
    height: 223px;
  }

  .tabs {
    display: flex;
    flex: none;
    height: 22px;
    border-bottom: 1px solid #dedede;
    background: #f1f1f1;
  }

  .tabs button {
    padding: 0 8px;
    border-right: 1px solid #c2c2c2;
    background: #e1e1e1;
    color: #777;
  }

  .tabs button.active {
    background: #f1f1f1;
    color: #222;
    font-weight: 700;
  }

  .panel-tools {
    display: flex;
    flex: none;
    align-items: center;
    gap: 7px;
    height: 27px;
    padding-left: 4px;
    border-bottom: 1px solid #d5d5d5;
  }

  .panel-tools button {
    gap: 3px;
  }

  .panel-tools .caret {
    margin-left: 3px;
  }

  .table-area {
    position: relative;
    display: flex;
    flex: 1;
    min-height: 0;
    overflow: hidden;
  }

  table {
    flex: 1;
    align-self: flex-start;
    table-layout: fixed;
    border-collapse: separate;
    border-spacing: 0;
  }

  th, td {
    box-sizing: border-box;
    height: 21px;
    padding: 0 0 0 3px;
    border-right: 1px solid #dedede;
    border-bottom: 1px solid #dedede;
    font-weight: 400;
    line-height: 20px;
    text-align: left;
    white-space: nowrap;
  }

  th {
    padding: 0;
    text-align: center;
  }

  th.chosen {
    border-color: #62a5ee;
    background: #80bbfb;
    color: #fff;
    font-weight: 700;
  }

  .short { width: 61px; }
  .kind { width: 81px; }

  td.tree {
    padding: 0;
  }

  td.focused {
    outline: 2px solid #7d7d7d;
    outline-offset: -2px;
  }

  .current td {
    background: #d5e8fc;
  }

  .branch {
    display: flex;
    align-items: center;
    height: 20px;
  }

  .fold {
    display: grid;
    place-items: center;
    box-sizing: border-box;
    width: 13px;
    height: 13px;
    margin: 0 6px 0 2px;
    border: 1px solid #888;
    border-radius: 2px;
    background: #fff;
  }

  .fold::before {
    content: "";
    width: 5px;
    height: 1px;
    background: #444;
  }

  .elbow {
    align-self: flex-start;
    width: 16px;
    height: 9px;
    margin: 0 6px 0 8px;
    border: solid #dedede;
    border-width: 0 0 1px 1px;
  }

  .scroll {
    flex: none;
    width: 15px;
  }

  .thumb {
    width: 8px;
    height: 303px;
    margin: 14px 4px 0;
    border-radius: 4px;
    background: #cacaca;
  }

  .thumb.long {
    height: 100%;
  }

  .tooltip {
    position: absolute;
    left: 331px;
    top: 181px;
    padding: 0 5px;
    border: 1px solid #aaa;
    background: #fff;
    line-height: 18px;
  }

  .no { width: 22px; }
  .label { width: 115px; }
  .extra { width: 41px; }

  td.no {
    padding: 0;
    text-align: center;
  }

  td.key {
    color: #1257ff;
  }

  td.extra {
    padding: 0 13px;
  }

  .splitter {
    align-self: center;
    flex: none;
    justify-content: center;
    width: 4px;
    height: 100px;
    margin-top: 166px;
    background: #5c6a77;
  }

  .splitter::before {
    content: "";
    border: 3px solid transparent;
    border-left: 0;
    border-right-color: #fff;
  }

  .canvas {
    flex: 1;
    min-width: 0;
    overflow: hidden;
    background: #000;
  }

  .canvas svg {
    display: block;
    width: 100%;
    height: 100%;
    shape-rendering: crispEdges;
  }

  .hatch { fill: url(#hatch); }
  .hatch-line { stroke: #7c7c7c; stroke-width: 3; }

  .plan path, .plan circle {
    fill: none;
    stroke: #808080;
    stroke-width: 3;
  }

  .plan .dash { stroke: #787878; stroke-dasharray: 24 9; }
  .plan .thick { stroke: #505050; stroke-width: 6; }
  .plan .pale { stroke: #d0d0d0; }
  .plan .olive { stroke: #8c8c00; stroke-width: 6; }
  .plan .bright, .bright { stroke: #ffff00; stroke-width: 3; }
  .plan .rose { stroke: #a04055; }
  .plan .green { stroke: #00d000; }
  .plan .green-thick { stroke: #009000; stroke-width: 5; }
  .plan .violet { stroke: #7f7fff; }
  .plan .solid { fill: #7f7fff; }
  .plan .white { stroke: #fff; }
  .plan .red-line, .red-line { stroke: #ff0000; stroke-width: 3; }
  .plan .broken { stroke-dasharray: 24 9; }
  .cyan { stroke: #40e0d0; stroke-width: 8; }
  .drips { fill: none; stroke: #808080; stroke-width: 4; }

  .fan {
    fill: none;
    stroke: #808080;
    stroke-width: 3;
  }

  .hub { fill: #808080; }

  .sky { fill: #5377b5; stroke: #8ab4ff; stroke-width: 4; }
  .red { fill: #99000c; stroke: #ff0010; stroke-width: 4; }
  .gold { fill: #999900; stroke: #ffff00; stroke-width: 5; }
  .lime { fill: #b2e21a; }
  .slot { fill: none; stroke: #e8e800; stroke-width: 4; }

  text {
    font-family: "Liberation Sans Narrow", "Liberation Sans", "Noto Sans CJK SC", sans-serif;
    font-size: 24px;
    fill: #909090;
  }

  .room { font-family: "Noto Sans CJK SC", sans-serif; font-size: 27px; }
  .area { font-size: 18px; }
  .axis { font-size: 30px; }
  .tag { font-size: 27px; fill: #8c8cff; }
  .note { font-size: 27px; fill: #fff; }
  .dim { font-size: 33px; fill: #fff; }
  .tiny { font-size: 21px; fill: #fff; font-weight: 700; }
</style>
